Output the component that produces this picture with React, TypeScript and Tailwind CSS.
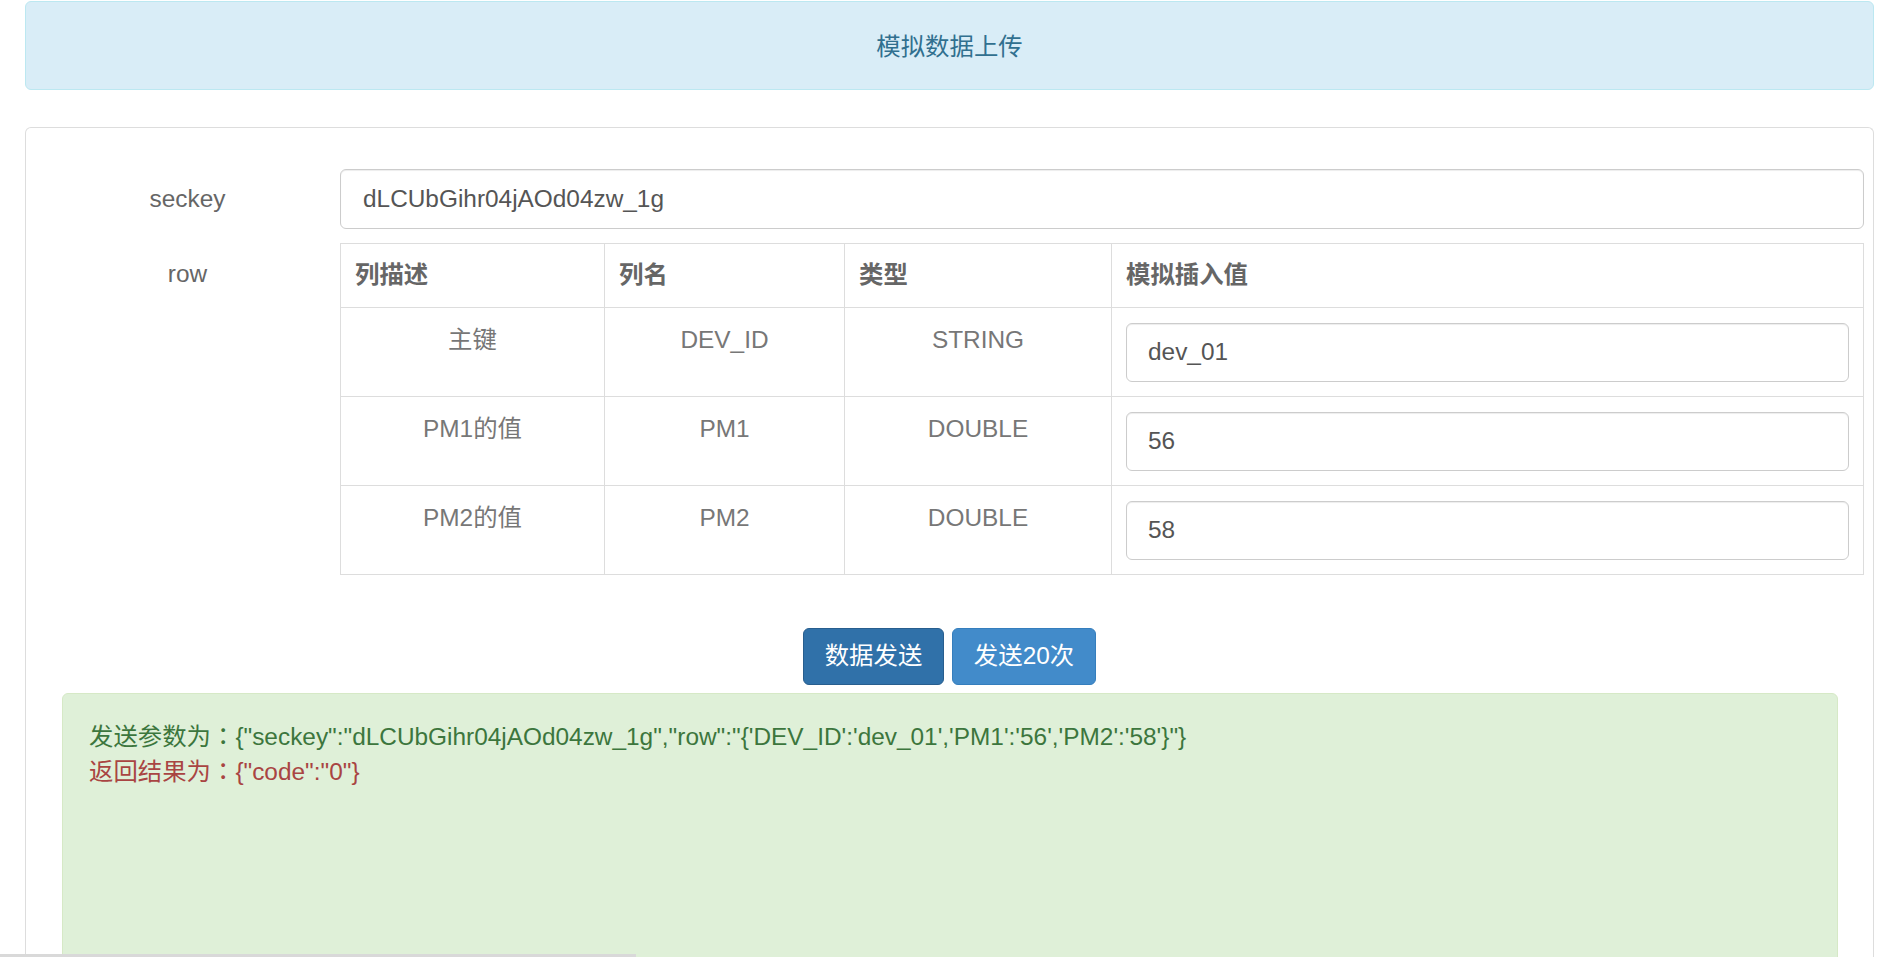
import { useState } from "react";

const rows = [
  { desc: "主键", name: "DEV_ID", type: "STRING", value: "dev_01" },
  { desc: "PM1的值", name: "PM1", type: "DOUBLE", value: "56" },
  { desc: "PM2的值", name: "PM2", type: "DOUBLE", value: "58" },
];

export default function App() {
  const [seckey, setSeckey] = useState("dLCUbGihr04jAOd04zw_1g");
  const [values, setValues] = useState(rows.map((r) => r.value));

  const sent =
    '{"seckey":"dLCUbGihr04jAOd04zw_1g","row":"{\'DEV_ID\':\'dev_01\',\'PM1\':\'56\',\'PM2\':\'58\'}"}';

  return (
    <div className="min-h-screen bg-white pl-[25px] pr-[21px] pt-px font-['Liberation_Sans','Noto_Sans_CJK_SC',sans-serif] text-[24.4px] leading-[1.42857]">
      {/* title bar */}
      <div className="flex h-[89px] items-center justify-center rounded-[6px] border border-[#bce8f1] bg-[#d9edf7] pt-[4px] text-[#31708f]">
        模拟数据上传
      </div>

      <div className="mt-[37px] min-h-[840px] rounded-t-[6px] border border-b-0 border-[#ddd] px-[9px] pt-[41px]">
        <div className="flex items-center">
          <label className="w-[305px] shrink-0 text-center text-[#666]">seckey</label>
          <input
            className="h-[60px] flex-1 rounded-[6px] border border-[#ccc] px-[22px] text-[#555] shadow-[inset_0_1px_1px_rgba(0,0,0,0.075)] outline-none"
            value={seckey}
            onChange={(e) => setSeckey(e.target.value)}
          />
        </div>

        <div className="mt-[14px] flex items-start">
          <label className="w-[305px] shrink-0 pt-[14px] text-center text-[#666]">row</label>
          <table className="w-full table-fixed border-collapse border border-[#ddd]">
            <colgroup>
              <col className="w-[264px]" />
              <col className="w-[240px]" />
              <col className="w-[267px]" />
              <col />
            </colgroup>
            <thead>
              <tr className="h-[64px]">
                <th className="border border-[#ddd] px-[14px] text-left font-bold text-[#666]">列描述</th>
                <th className="border border-[#ddd] px-[14px] text-left font-bold text-[#666]">列名</th>
                <th className="border border-[#ddd] px-[14px] text-left font-bold text-[#666]">类型</th>
                <th className="border border-[#ddd] px-[14px] text-left font-bold text-[#666]">模拟插入值</th>
              </tr>
            </thead>
            <tbody>
              {rows.map((r, i) => (
                <tr key={r.name} className="h-[89px]">
                  <td className="border border-[#ddd] px-[14px] pt-[15px] text-center align-top text-[#777]">{r.desc}</td>
                  <td className="border border-[#ddd] px-[14px] pt-[15px] text-center align-top text-[#777]">{r.name}</td>
                  <td className="border border-[#ddd] px-[14px] pt-[15px] text-center align-top text-[#777]">{r.type}</td>
                  <td className="border border-[#ddd] px-[14px] align-middle">
                    <input
                      className="h-[59px] w-full rounded-[6px] border border-[#ccc] px-[21px] text-[#555] shadow-[inset_0_1px_1px_rgba(0,0,0,0.075)] outline-none"
                      value={values[i]}
                      onChange={(e) => {
                        const next = [...values];
                        next[i] = e.target.value;
                        setValues(next);
                      }}
                    />
                  </td>
                </tr>
              ))}
            </tbody>
          </table>
        </div>

        <div className="mt-[53px] flex justify-center gap-[8px]">
          <button className="h-[57px] w-[141px] rounded-[6px] border border-[#285e8e] bg-[#3071a9] text-white">
            数据发送
          </button>
          <button className="h-[57px] w-[144px] rounded-[6px] border border-[#357ebd] bg-[#428bca] text-white">
            发送20次
          </button>
        </div>

        <div className="mt-[8px] ml-[27px] mr-[26px] h-[300px] rounded-[6px] border border-[#d6e9c6] bg-[#dff0d8] px-[26px] pt-[23px]">
          <div className="h-[35px] leading-[35px] text-[#3c763d]">
            发送参数为<span className="font-['Noto_Sans_CJK_TC',sans-serif]">：</span>
            {sent}
          </div>
          <div className="h-[35px] leading-[35px] text-[#a94442]">
            返回结果为<span className="font-['Noto_Sans_CJK_TC',sans-serif]">：</span>
            {'{"code":"0"}'}
          </div>
        </div>
      </div>

      {/* horizontal scrollbar thumb */}
      <div className="fixed bottom-0 left-0 h-[3px] w-[636px] bg-[#d9d9d9]" />
    </div>
  );
}
